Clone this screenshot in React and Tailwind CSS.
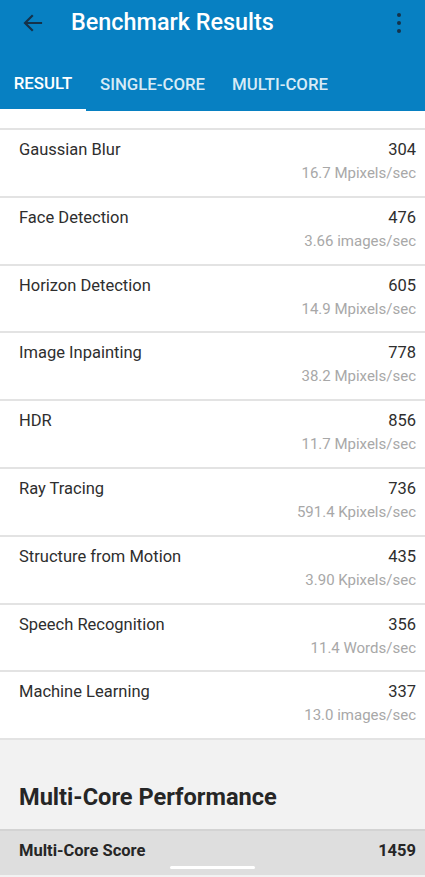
const rows = [
  { name: 'Gaussian Blur', score: '304', rate: '16.7 Mpixels/sec' },
  { name: 'Face Detection', score: '476', rate: '3.66 images/sec' },
  { name: 'Horizon Detection', score: '605', rate: '14.9 Mpixels/sec' },
  { name: 'Image Inpainting', score: '778', rate: '38.2 Mpixels/sec' },
  { name: 'HDR', score: '856', rate: '11.7 Mpixels/sec' },
  { name: 'Ray Tracing', score: '736', rate: '591.4 Kpixels/sec' },
  { name: 'Structure from Motion', score: '435', rate: '3.90 Kpixels/sec' },
  { name: 'Speech Recognition', score: '356', rate: '11.4 Words/sec' },
  { name: 'Machine Learning', score: '337', rate: '13.0 images/sec' },
];

function Header() {
  return (
    <div className="bg-[#0780c2] h-[111px] flex flex-col">
      <div className="h-[46px] flex items-center">
        <svg width="24" height="24" viewBox="0 0 24 24" className="ml-[21px]" fill="none">
          <path d="M20 12H4.5M11 5l-7 7 7 7" stroke="#15324a" strokeWidth="2.2" strokeLinecap="square" />
        </svg>
        <h1 className="ml-[26px] text-white text-[23.4px] font-medium">Benchmark Results</h1>
        <div className="ml-auto mr-[24px] flex flex-col gap-[3.5px]">
          <span className="w-[4.5px] h-[4.5px] rounded-full bg-[#15324a]" />
          <span className="w-[4.5px] h-[4.5px] rounded-full bg-[#15324a]" />
          <span className="w-[4.5px] h-[4.5px] rounded-full bg-[#15324a]" />
        </div>
      </div>
      <div className="flex mt-auto h-[65px] text-[16.8px] font-medium">
        <div className="w-[86px] flex flex-col">
          <span className="flex-1 flex items-center justify-center pt-[12px] text-white">RESULT</span>
          <span className="h-[2px] bg-white" />
        </div>
        <span className="w-[133px] flex items-center justify-center pt-[12px] text-[#d7ebf6]">SINGLE-CORE</span>
        <span className="w-[122px] flex items-center justify-center pt-[12px] text-[#d7ebf6]">MULTI-CORE</span>
      </div>
    </div>
  );
}

export default function App() {
  return (
    <div className="w-[425px] h-[877px] overflow-hidden bg-[#f2f2f2] font-['Roboto',sans-serif] relative">
      <Header />
      <div className="bg-white">
        <div className="h-[17px]" />
        {rows.map((r) => (
          <div key={r.name} className="h-[67.8px] border-t-2 border-[#e3e3e3] px-[19px] pr-[9px] pt-[8px]">
            <div className="flex justify-between text-[16.5px] leading-[24px] text-[#2e2e2e]">
              <span>{r.name}</span>
              <span>{r.score}</span>
            </div>
            <div className="text-right text-[15px] leading-[20px] text-[#a8a8a8] mt-[1px]">{r.rate}</div>
          </div>
        ))}
      </div>
      <div className="border-t-2 border-[#e3e3e3] h-[91px] flex items-end px-[19px] pb-[14px]">
        <h2 className="text-[23.6px] font-bold text-[#262626]">Multi-Core Performance</h2>
      </div>
      <div className="bg-[#dedede] border-t-2 border-[#d3d3d3] h-[46px] flex items-center justify-between px-[19px] pr-[9px] pb-[3px] text-[16.5px] font-bold text-[#262626]">
        <span>Multi-Core Score</span>
        <span>1459</span>
      </div>
      <div className="absolute left-[170px] bottom-[8px] w-[85px] h-[3px] rounded-full bg-white" />
    </div>
  );
}
